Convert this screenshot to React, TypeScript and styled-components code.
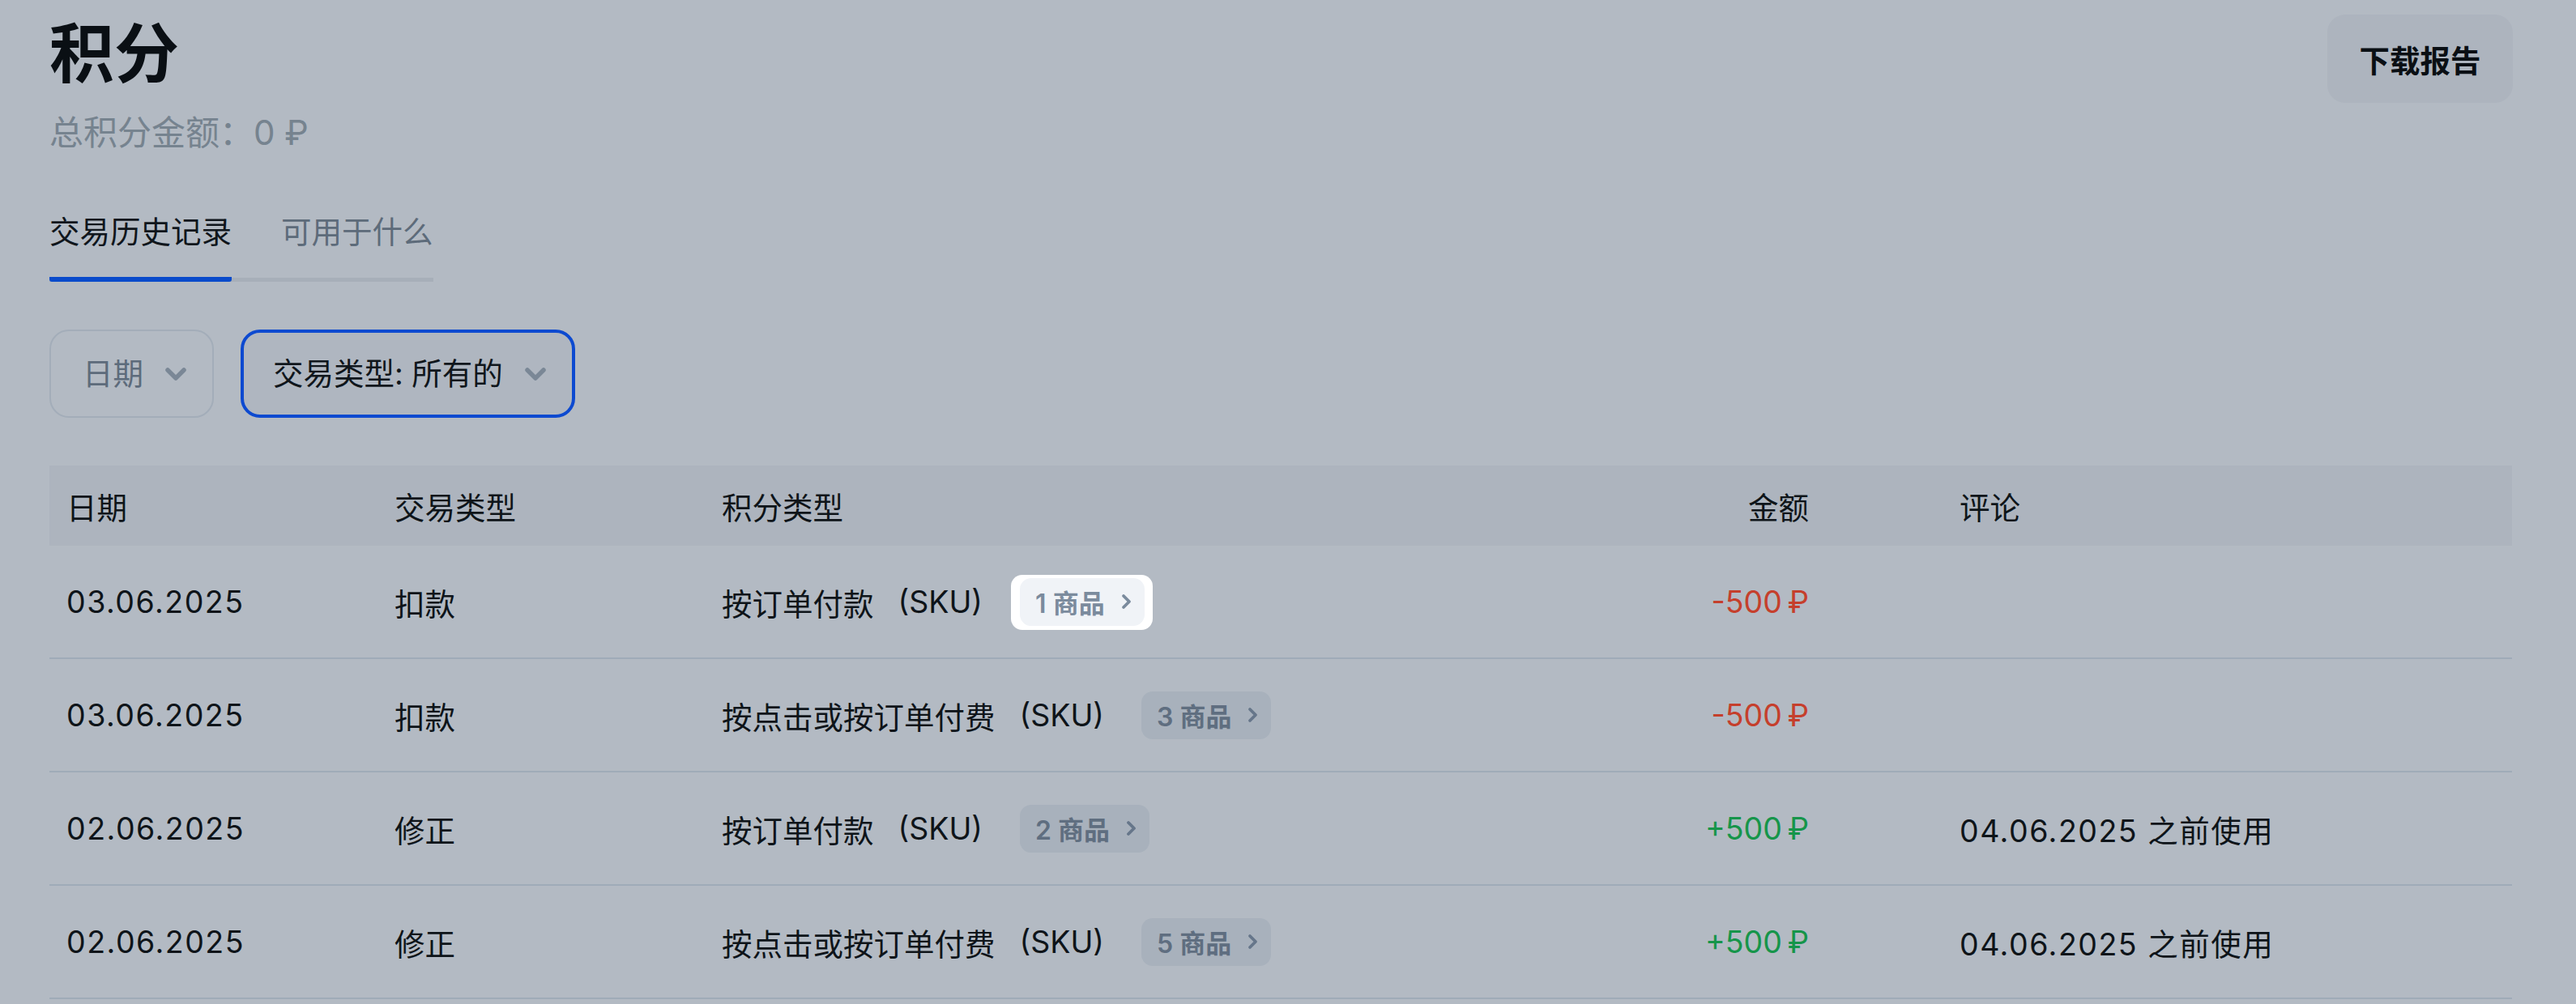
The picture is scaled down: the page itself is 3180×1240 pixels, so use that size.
import styled, { createGlobalStyle } from 'styled-components';

const GlobalStyle = createGlobalStyle`
  html, body {
    margin: 0;
    padding: 0;
    background: #b3bac3;
  }
  body {
    font-family: 'Inter', 'Noto Sans CJK SC', sans-serif;
    color: #0e1419;
  }
`;

type Row = {
  date: string;
  kind: string;
  pointType: string;
  count: number;
  amount: string;
  positive: boolean;
  comment: string;
  spotlight?: boolean;
};

const rows: Row[] = [
  {
    date: '03.06.2025',
    kind: '扣款',
    pointType: '按订单付款',
    count: 1,
    amount: '-500\u202F₽',
    positive: false,
    comment: '',
    spotlight: true,
  },
  {
    date: '03.06.2025',
    kind: '扣款',
    pointType: '按点击或按订单付费',
    count: 3,
    amount: '-500\u202F₽',
    positive: false,
    comment: '',
  },
  {
    date: '02.06.2025',
    kind: '修正',
    pointType: '按订单付款',
    count: 2,
    amount: '+500\u202F₽',
    positive: true,
    comment: '04.06.2025 之前使用',
  },
  {
    date: '02.06.2025',
    kind: '修正',
    pointType: '按点击或按订单付费',
    count: 5,
    amount: '+500\u202F₽',
    positive: true,
    comment: '04.06.2025 之前使用',
  },
];

const ChevronDown = () => (
  <svg width="28" height="20" viewBox="0 0 28 20" fill="none">
    <path
      d="M4 5 L14 15 L24 5"
      stroke="#7a8796"
      strokeWidth="5.5"
      strokeLinecap="round"
      strokeLinejoin="round"
    />
  </svg>
);

const ChevronRight = ({ color }: { color: string }) => (
  <svg width="13" height="20" viewBox="0 0 13 20" fill="none">
    <path
      d="M3 3 L10 10 L3 17"
      stroke={color}
      strokeWidth="3.8"
      strokeLinecap="round"
      strokeLinejoin="round"
    />
  </svg>
);

const App = () => {
  return (
    <Page>
      <GlobalStyle />
      <Header>
        <div>
          <Title>积分</Title>
          <Subtitle>总积分金额：0 ₽</Subtitle>
        </div>
        <DownloadButton>下载报告</DownloadButton>
      </Header>

      <Tabs>
        <Tab $active>交易历史记录</Tab>
        <Tab>可用于什么</Tab>
      </Tabs>

      <Filters>
        <FilterButton>
          <FilterLabel>日期</FilterLabel>
          <ChevronDown />
        </FilterButton>
        <FilterButton $selected>
          <FilterLabel $selected>交易类型: 所有的</FilterLabel>
          <ChevronDown />
        </FilterButton>
      </Filters>

      <Table>
        <HeadRow>
          <Cell>日期</Cell>
          <Cell>交易类型</Cell>
          <Cell>积分类型</Cell>
          <AmountCell>金额</AmountCell>
          <Cell>评论</Cell>
        </HeadRow>
        {rows.map((row, i) => (
          <BodyRow key={i}>
            <NumberCell>{row.date}</NumberCell>
            <Cell>{row.kind}</Cell>
            <Cell>
              {row.pointType}
              <Sku>(SKU)</Sku>
              {row.spotlight ? (
                <Spotlight>
                  <Chip $light>
                    {row.count} 商品
                    <ChevronRight color="#7b8b9d" />
                  </Chip>
                </Spotlight>
              ) : (
                <Chip>
                  {row.count} 商品
                  <ChevronRight color="#66768a" />
                </Chip>
              )}
            </Cell>
            <AmountCell $color={row.positive ? '#16954a' : '#c53f2c'}>
              {row.amount}
            </AmountCell>
            <NumberCell>{row.comment}</NumberCell>
          </BodyRow>
        ))}
      </Table>
    </Page>
  );
};

const Page = styled.div`
  padding: 18px 78px 0 61px;
  min-height: 1240px;
  box-sizing: border-box;
  background: #b3bac3;
`;
const Header = styled.div`
  display: flex;
  justify-content: space-between;
  align-items: flex-start;
`;
const Title = styled.h1`
  margin: 0;
  font-size: 80px;
  line-height: 96px;
  font-weight: 700;
  color: #0a0f14;
`;
const Subtitle = styled.div`
  margin-top: 22px;
  font-size: 42px;
  line-height: 56px;
  color: #76838f;
`;
const DownloadButton = styled.button`
  height: 109px;
  width: 229px;
  border: none;
  border-radius: 22px;
  background: #adb4be;
  font-family: inherit;
  font-size: 37.5px;
  font-weight: 700;
  color: #0a0f14;
  padding: 0;
`;
const Tabs = styled.div`
  display: inline-flex;
  gap: 61px;
  margin-top: 71px;
  border-bottom: 5px solid #a7afb9;
`;
const Tab = styled.div<{ $active?: boolean }>`
  font-size: 37.5px;
  line-height: 48px;
  padding-bottom: 31px;
  margin-bottom: -5px;
  color: ${(p) => (p.$active ? '#10161c' : '#5d6b7a')};
  border-bottom: 6px solid ${(p) => (p.$active ? '#0a4bcb' : 'transparent')};
  border-radius: 0 0 3px 3px;
`;
const Filters = styled.div`
  display: flex;
  gap: 33px;
  margin-top: 59px;
`;
const FilterButton = styled.div<{ $selected?: boolean }>`
  box-sizing: border-box;
  height: 109px;
  display: flex;
  align-items: center;
  gap: 26px;
  padding: 0 31px 0 ${(p) => (p.$selected ? '36px' : '39px')};
  border: ${(p) => (p.$selected ? '4px solid #0d4ad0' : '2px solid #a3adb9')};
  border-radius: 24px;
  background: ${(p) => (p.$selected ? '#afb6c0' : 'transparent')};
`;
const FilterLabel = styled.span<{ $selected?: boolean }>`
  font-size: 37.5px;
  line-height: 48px;
  color: ${(p) => (p.$selected ? '#10161c' : '#5d6b7b')};
`;
const Table = styled.div`
  margin-top: 59px;
  width: 3040px;
`;
const gridColumns = `405px 404px 1fr 320px 703px`;
const HeadRow = styled.div`
  display: grid;
  grid-template-columns: ${gridColumns};
  align-items: center;
  height: 99px;
  background: #adb4be;
  font-size: 37.5px;
  color: #0e1419;
`;
const BodyRow = styled.div`
  display: grid;
  grid-template-columns: ${gridColumns};
  align-items: center;
  height: 138px;
  border-bottom: 2px solid #9fabb8;
  font-size: 37.5px;
  color: #0e1419;
`;
const Cell = styled.div`
  padding: 0 21px;
  display: flex;
  align-items: center;
  white-space: nowrap;
`;
const NumberCell = styled(Cell)`
  letter-spacing: 0.04em;
`;
const AmountCell = styled.div<{ $color?: string }>`
  padding: 0 165px 0 21px;
  text-align: right;
  white-space: nowrap;
  color: ${(p) => p.$color || '#0e1419'};
`;
const Sku = styled.span`
  margin: 0 46px 0 30px;
`;
const Spotlight = styled.span`
  display: inline-flex;
  padding: 4px 10px 5px 11px;
  margin: -4px -10px -5px -11px;
  background: #ffffff;
  border-radius: 14px;
`;
const Chip = styled.span<{ $light?: boolean }>`
  display: inline-flex;
  align-items: center;
  gap: 20px;
  height: 59px;
  box-sizing: border-box;
  padding: 0 16px 0 19px;
  border-radius: 14px;
  font-size: 32px;
  font-weight: 600;
  background: ${(p) => (p.$light ? '#f0f3f7' : '#a8b1bc')};
  color: ${(p) => (p.$light ? '#7b8b9d' : '#5f6e80')};
`;

export default App;
